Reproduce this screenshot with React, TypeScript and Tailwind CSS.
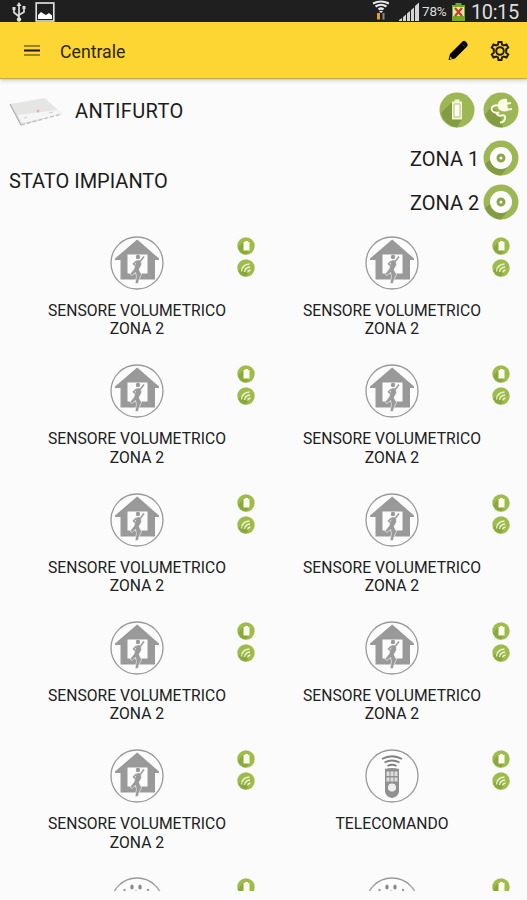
type Device = { name?: string; zone?: string; kind: 'volumetric' | 'remote' | 'siren' };

const volumetric: Device = { name: 'SENSORE VOLUMETRICO', zone: 'ZONA 2', kind: 'volumetric' };

const devices: Device[] = [
  ...Array.from({ length: 9 }, () => volumetric),
  { name: 'TELECOMANDO', kind: 'remote' },
  { kind: 'siren' },
  { kind: 'siren' },
];

function StatusBar() {
  return (
    <div className="flex h-[22px] shrink-0 items-center bg-[#1f1f1f] text-[#dedede]">
      <svg className="ml-[11px] h-[22px] w-4" viewBox="0 0 16 22" fill="none" stroke="#dedede" strokeWidth="1.7">
        <path d="M8 5v15M3 9v3.5l5 4M13 8v4l-5 3" />
        <path d="M5.5 6 8 2l2.5 4zM1.5 7h3v3h-3zM11.5 6h3v3h-3z" fill="#dedede" stroke="none" />
        <circle cx="8" cy="19.5" r="2.2" fill="#dedede" stroke="none" />
      </svg>
      <svg className="ml-[8px] h-[22px] w-5" viewBox="0 0 20 22">
        <rect x="1.2" y="3" width="17.6" height="18" fill="none" stroke="#dedede" strokeWidth="1.7" />
        <path d="M3 19v-4l3-3 3 2 2 1 3-2 3 2.5V19z" fill="#fff" />
      </svg>
      <div className="ml-auto flex h-[22px] items-center">
        <svg className="h-[22px] w-[20px]" viewBox="0 0 20 22" fill="none" stroke="#e8e8e8" strokeWidth="2.2">
          <path d="M4 3.500q8-4 16 0M6.500 6.500q5.500-3.500 11 0M9.500 9.500q2.500-2 5 0" />
          <path d="M10 11l2 2 2-2z" fill="#fff" stroke="none" />
          <path d="M9.500 13v6.500" stroke="#e89a32" strokeWidth="3" />
          <path d="M14.500 13v6.500" stroke="#888" strokeWidth="2" />
        </svg>
        <svg className="ml-[9px] h-[22px] w-[23px]" viewBox="0 0 23 22">
          <path d="M1 21h3v-3l-3 2zM5 21h3v-6.5l-3 2.5zM9 21h3V11l-3 2.5zM13 21h3V7.5L13 10zM17 21h4V2.5L17 6z" fill="#d5d5d5" />
        </svg>
        <span className="ml-px w-[27px] text-[13.5px] leading-[22px] tracking-[-0.2px]">78%</span>
        <svg className="ml-[2px] h-[22px] w-[16px]" viewBox="0 0 16 22">
          <path d="M4.500 3h6v2H14v16H1V5h3.500z" fill="#6faa22" />
          <path d="M2 7h11v9H2z" fill="#e2e6ba" />
          <path d="m4 8 7 8M11 8l-7 8" stroke="#ce3d22" strokeWidth="2.2" />
        </svg>
        <span className="ml-[4px] mr-[8px] w-[48px] whitespace-nowrap pt-px text-[20px] leading-[22px] tracking-[-0.4px]">10:15</span>
      </div>
    </div>
  );
}

function AppBar() {
  return (
    <header className="relative flex h-[56px] shrink-0 items-center bg-[#fdd633] pl-[24px] pr-[17px] shadow-[0_1px_1px_#c2a84d,0_3px_4px_rgba(0,0,0,0.16)]">
      <svg className="h-4 w-4" viewBox="0 0 16 16">
        <path d="M0 4h16M0 13h16" stroke="#9b8425" strokeWidth="2" />
        <path d="M0 8.5h16" stroke="#1b1704" strokeWidth="2" />
      </svg>
      <h1 className="ml-[20px] pt-[3px] text-[17.7px] leading-6 text-[#2b2509]">Centrale</h1>
      <svg className="ml-auto h-[22px] w-[22px]" viewBox="0 0 22 22">
        <path d="M1.500 21 3 15 15 3Q17 1 18.500 2.500L20 4Q21.500 6 20 7.500L8 19.500z" />
        <path d="M3.200 17.500 5.300 19.400 3 20z" fill="#fdd633" />
        <path d="m15.500 5.500 2.500 2.500" stroke="#665512" strokeWidth=".8" />
      </svg>
      <svg className="ml-[21px] mt-[2px] h-[20px] w-[20px]" viewBox="0 0 20 20" fill="none" stroke="#211c06">
        <path
          d="M8 3.500 8.500 1h3l.5 2.500 1.800 1 2.700-1 1.700 3-2 1.700v3.600l2 1.700-1.700 3-2.700-1-1.800 1-.5 2.500h-3L8 16.500l-1.800-1-2.700 1-1.700-3 2-1.700V8.200l-2-1.700 1.700-3 2.700 1z"
          strokeWidth="2"
        />
        <circle cx="10" cy="10" r="3.800" strokeWidth="2" />
      </svg>
    </header>
  );
}

function PanelPicture() {
  return (
    <svg className="mt-[5px] h-[32px] w-[54px]" viewBox="0 0 54 32">
      <path d="M1 7 36 1 53 17 13 28z" fill="#e5e5e4" />
      <path d="M9 18 48 13 53 17 13 26z" fill="#f6f5f5" />
      <path d="M1 7 12 28" fill="none" stroke="#aaa" strokeWidth="1.2" />
      <path d="M12 28 53 17" fill="none" stroke="#b9b9b9" strokeWidth="1.2" strokeDasharray="4 2" />
      <path d="m15 21 3-1M40 16l4-1" stroke="#ccc" />
      <circle cx="29" cy="14" r="1.5" fill="#f3a9ad" />
    </svg>
  );
}

function BatteryBadge() {
  return (
    <svg className="h-[36px] w-[36px]" viewBox="0 0 36 36">
      <circle cx="18" cy="18" r="17.5" fill="#9db755" />
      <path d="M13 10 2 21q4 13 16 14.500L23 27z" fill="#839b42" />
      <path d="M15.500 7.500h5v2H23v18H13v-18h2.500z" fill="#f3f5d4" />
      <path d="M15 12h6v13h-6z" fill="#fffff0" stroke="#b3c17f" />
    </svg>
  );
}

function PlugBadge() {
  return (
    <svg className="h-[36px] w-[36px]" viewBox="0 0 36 36">
      <circle cx="18" cy="18" r="17.5" fill="#9db755" />
      <path d="M8 15 2 23q5 12 18 12.500l-3-14z" fill="#839b42" />
      <path d="M15 11Q18 6 24 7l1 12q-7 1.500-10-3z" fill="#fafbe2" />
      <path d="M24 11.500l4-.5M25 17.500l4-.5" stroke="#fafbe2" strokeWidth="2" />
      <path d="M16 13.500q-7-1-7.500 3.500.5 4.500 8 3.500" fill="none" stroke="#fafbe2" strokeWidth="2" />
      <path d="M13 20.500q2 4 5 3 5-1 4 3-1 4-5 4" fill="none" stroke="#fafbe2" strokeWidth="2" />
    </svg>
  );
}

function ZoneBadge() {
  return (
    <svg className="h-[36px] w-[36px]" viewBox="0 0 36 36">
      <circle cx="18" cy="18" r="17.5" fill="#9db755" />
      <path d="M7 20 2 24q5 11 16 11.500L25 27z" fill="#839b42" />
      <circle cx="18" cy="18" r="11" fill="#fff" />
      <circle cx="18" cy="18" r="3" fill="#fff" stroke="#8ca649" strokeWidth="3" />
    </svg>
  );
}

function DeviceIcon({ kind }: { kind: Device['kind'] }) {
  return (
    <svg className="h-[54px] w-[54px]" viewBox="0 0 54 54" fill="#999">
      <circle cx="27" cy="27" r="26" fill="#fcfcfc" stroke="#999" strokeWidth="1.3" />
      {kind === 'volumetric' && (
        <>
          <path d="M27.200 3.500 49 22.500V24h-4v19.500H10.500V24H5v-1.500z" />
          <path d="M17.500 18.500h20v19h-20z" fill="#fcfcfc" />
          <circle cx="28" cy="21" r="2.200" />
          <path
            d="M26.500 24h4.500l.5 5-2.500 4.500 2.500 5-2 4-1.500 5h-3l1.500-7-1-4-3.500 3-2-1.500 4-5z"
            stroke="#fcfcfc"
            strokeWidth=".6"
          />
          <path d="m30.500 25 3.500-4.500M26.500 25l-3 3 2.500 2" fill="none" stroke="#999" strokeWidth="1.5" />
        </>
      )}
      {kind === 'remote' && (
        <>
          <path d="M17 10q10-5.500 20 0M19.500 13.500q7.500-4 15 0M22.500 17q4.500-2.500 9 0" fill="none" stroke="#808080" strokeWidth="1.9" />
          <path d="M20 20q7-2 14 0v23q-1 5-7 6-6-1-7-6z" fill="#909090" />
          <path d="M21.500 22.500h3v4.500h-3zM25.500 22.500h3v4.500h-3zM29.500 22.500h3v4.500h-3zM21.500 28.500h3v4h-3zM25.500 28.500h3v4h-3zM29.500 28.500h3v4h-3z" fill="#ddd" />
          <circle cx="27" cy="38.5" r="4" fill="#eee" />
        </>
      )}
      {kind === 'siren' && (
        <>
          <ellipse cx="22" cy="10" rx="1.7" ry="2.5" fill="#888" />
          <ellipse cx="30" cy="10" rx="1.7" ry="2.5" fill="#888" />
          <circle cx="14.5" cy="13" r="1.2" />
          <circle cx="38" cy="13" r="1.2" />
          <circle cx="26" cy="13.5" r=".6" />
        </>
      )}
    </svg>
  );
}

function DeviceStatus() {
  return (
    <div className="flex flex-col gap-1">
      <svg className="h-[18px] w-[18px]" viewBox="0 0 18 18">
        <circle cx="9" cy="9" r="8.7" fill="#9ebb4c" />
        <path d="M6 5 1 11q3 6 8 6.500L12 14z" fill="#8aa83e" />
        <path d="M8 4h3v1h1.500v8.500h-6V5H8z" fill="#fbfde8" />
      </svg>
      <svg className="h-[18px] w-[18px]" viewBox="0 0 18 18" fill="none">
        <circle cx="9" cy="9" r="8.7" fill="#9ebb4c" />
        <path d="M5 9 1 12q3 5 8 5.500l3-4z" fill="#8aa83e" />
        <path d="M4.500 12.500Q5 5.500 12.500 5M7.500 13Q8 8.500 13 8M10.500 13.500Q11 11.500 13.500 11" stroke="#edf3d0" strokeWidth="1.3" />
      </svg>
    </div>
  );
}

function DeviceCell({ device }: { device: Device }) {
  return (
    <div className="grid grid-cols-[1fr_54px_1fr] grid-rows-[66px_auto] pt-[9px]">
      <div className="col-start-2">
        <DeviceIcon kind={device.kind} />
      </div>
      <div className="flex justify-end pr-[9px] pt-[1px]">
        <DeviceStatus />
      </div>
      {device.name && (
        <div className="col-span-3 pl-px text-center text-[15.7px] leading-[18.4px] text-[#202020]">
          <p>{device.name}</p>
          {device.zone && <p>{device.zone}</p>}
        </div>
      )}
    </div>
  );
}

export default function App() {
  return (
    <div className="flex h-[900px] w-[527px] flex-col overflow-hidden bg-[#fbfbfb] font-['Roboto',sans-serif] text-[#1c1c1c]">
      <StatusBar />
      <AppBar />
      <section className="h-[149px] shrink-0 pl-[9px] pr-[8px] pt-[14px] text-[20px]">
        <div className="flex h-[36px] items-center">
          <PanelPicture />
          <h2 className="ml-[12px] pt-[2px] tracking-[0.35px]">ANTIFURTO</h2>
          <div className="ml-auto flex gap-2">
            <BatteryBadge />
            <PlugBadge />
          </div>
        </div>
        <div className="mt-[12px] flex items-center justify-between">
          <h2 className="pt-[2px]">STATO IMPIANTO</h2>
          <div className="flex flex-col gap-2">
            {['ZONA 1', 'ZONA 2'].map((zone) => (
              <div key={zone} className="flex h-[36px] items-center">
                <span className="w-[73px] whitespace-nowrap pt-[2px]">{zone}</span>
                <ZoneBadge />
              </div>
            ))}
          </div>
        </div>
      </section>
      <main className="grid h-[664px] shrink-0 auto-rows-[128.3px] grid-cols-[255px_255px] overflow-hidden pl-[9px]">
        {devices.map((device, i) => (
          <DeviceCell key={i} device={device} />
        ))}
      </main>
    </div>
  );
}
